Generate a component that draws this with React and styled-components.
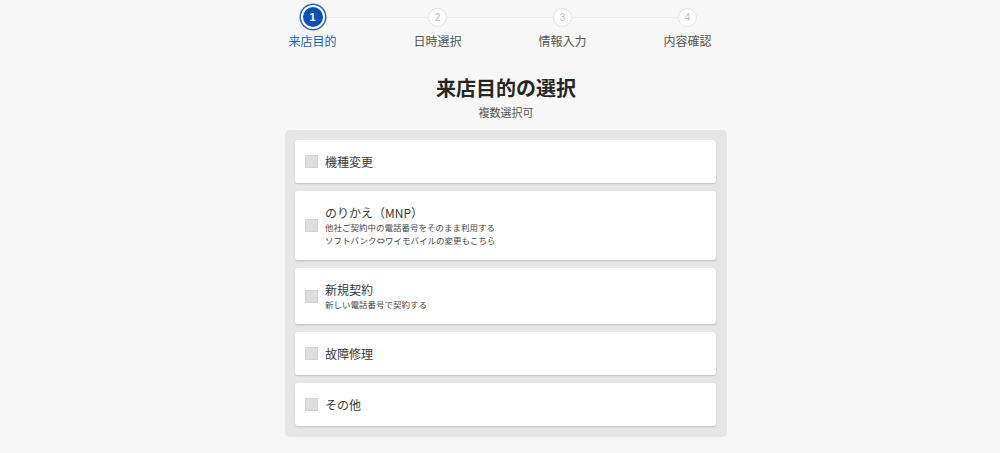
import styled, { createGlobalStyle } from 'styled-components'

const GlobalStyle = createGlobalStyle`
  html, body {
    margin: 0;
    padding: 0;
    background: #f7f7f7;
    font-family: "Noto Sans CJK JP", "Noto Sans", sans-serif;
    color: #333;
  }
`

const Page = styled.div`
  width: 1000px;
  height: 453px;
  overflow: hidden;
`

const Stepper = styled.ol`
  list-style: none;
  margin: 0 auto;
  padding: 7px 0 0;
  width: 500px;
  display: grid;
  grid-template-columns: repeat(4, 1fr);
`

const Step = styled.li`
  position: relative;
  display: flex;
  flex-direction: column;
  align-items: center;

  &:not(:first-child)::before {
    content: '';
    position: absolute;
    top: 10px;
    right: 50%;
    width: 100%;
    height: 1px;
    background: #ececec;
    z-index: 0;
  }
`

const Dot = styled.span`
  position: relative;
  z-index: 1;
  height: 20px;
  display: flex;
  align-items: center;
  justify-content: center;
`

const Circle = styled.span`
  box-sizing: border-box;
  width: ${p => (p.$active ? '24px' : '19px')};
  height: ${p => (p.$active ? '24px' : '19px')};
  border-radius: 50%;
  display: flex;
  align-items: center;
  justify-content: center;
  font-family: "Liberation Sans", Arial, sans-serif;
  font-size: ${p => (p.$active ? '11px' : '10px')};
  font-weight: ${p => (p.$active ? 700 : 400)};
  background: ${p => (p.$active ? '#0d4fb6' : '#fff')};
  color: ${p => (p.$active ? '#fff' : '#bbb')};
  border: ${p => (p.$active ? '2px solid #fff' : '1.5px solid #e2e2e2')};
  box-shadow: ${p => (p.$active ? '0 0 0 1.5px #2a63c0' : 'none')};
`

const StepLabel = styled.span`
  margin-top: 5px;
  font-size: 12px;
  line-height: 18px;
  color: ${p => (p.$active ? '#2461b5' : '#555')};
`

const Main = styled.section`
  width: 442px;
  margin: 0 auto;
  padding-left: 12px;
  padding-top: 23px;
  display: flex;
  flex-direction: column;
  align-items: center;
`

const Title = styled.h1`
  margin: 0;
  font-size: 20px;
  line-height: 30px;
  font-weight: 700;
  color: #262626;
`

const Note = styled.p`
  margin: 1px 0 0;
  font-size: 11px;
  line-height: 16px;
  color: #555;
`

const Panel = styled.div`
  box-sizing: border-box;
  margin-top: 10px;
  width: 442px;
  padding: 10px 11px 11px 10px;
  background: #e6e6e6;
  border-radius: 5px;
  display: flex;
  flex-direction: column;
  gap: 8px;
`

const Option = styled.label`
  box-sizing: border-box;
  min-height: ${p => p.$h}px;
  padding: 0 10px;
  background: #fff;
  border-radius: 3px;
  box-shadow: 0 1px 2px rgba(0, 0, 0, 0.18);
  display: flex;
  align-items: center;
  gap: 7px;
  cursor: pointer;
`

const Box = styled.span`
  box-sizing: border-box;
  flex: none;
  width: 13px;
  height: 13px;
  background: #dedede;
  border: 1px solid #d4d4d4;
`

const Texts = styled.span`
  display: flex;
  flex-direction: column;
`

const Name = styled.span`
  font-size: 12px;
  line-height: 17px;
  color: #3a3a3a;
`

const Sub = styled.span`
  font-size: 8.5px;
  line-height: 13px;
  color: #4a4a4a;
`

const steps = ['来店目的', '日時選択', '情報入力', '内容確認']

const options = [
  { name: '機種変更', h: 43 },
  {
    name: 'のりかえ（MNP）',
    subs: ['他社ご契約中の電話番号をそのまま利用する', 'ソフトバンク⇔ワイモバイルの変更もこちら'],
    h: 69,
  },
  { name: '新規契約', subs: ['新しい電話番号で契約する'], h: 56 },
  { name: '故障修理', h: 43 },
  { name: 'その他', h: 43 },
]

export default function App() {
  return (
    <Page>
      <GlobalStyle />
      <Stepper>
        {steps.map((s, i) => (
          <Step key={s}>
            <Dot>
              <Circle $active={i === 0}>{i + 1}</Circle>
            </Dot>
            <StepLabel $active={i === 0}>{s}</StepLabel>
          </Step>
        ))}
      </Stepper>
      <Main>
        <Title>来店目的の選択</Title>
        <Note>複数選択可</Note>
        <Panel>
          {options.map(o => (
            <Option key={o.name} $h={o.h}>
              <Box />
              <Texts>
                <Name>{o.name}</Name>
                {o.subs && o.subs.map(t => <Sub key={t}>{t}</Sub>)}
              </Texts>
            </Option>
          ))}
        </Panel>
      </Main>
    </Page>
  )
}
